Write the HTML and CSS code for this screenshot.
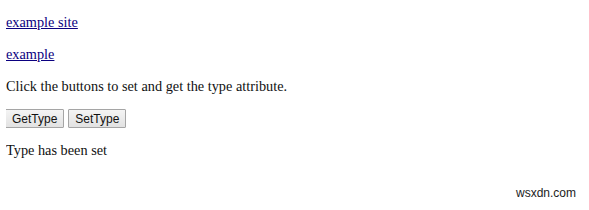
FILE: index.html
```html
<!DOCTYPE html>
<html lang="en">
<head>
    <meta charset="UTF-8">
    <title>Type attribute</title>
    <link rel="stylesheet" href="styles.css">
</head>
<body>
    <p class="line first"><a href="#" class="link">example site</a></p>
    <p class="line"><a href="#" class="link">example</a></p>
    <p class="line">Click the buttons to set and get the type attribute.</p>
    <div class="buttons">
        <button class="btn">GetType</button>
        <button class="btn">SetType</button>
    </div>
    <p class="line result">Type has been set</p>

    <!-- watermark -->
    <div class="mark">wsxdn.com</div>
</body>
</html>
```

FILE: styles.css
```css
body {
    margin: 6px;
    font-family: 'Liberation Serif', 'Times New Roman', serif;
    font-size: 14.3px;
    color: #111;
    background: #fff;
}
.line {
    margin: 14px 0;
    line-height: 18px;
}
.line.first {
    margin-top: 7px;
}
.line.result {
    margin-top: 13px;
}
.link {
    color: #0b0080;
}
.buttons {
    display: flex;
    gap: 4px;
    margin: 0 0 0 -1px;
}
.btn {
    font-family: 'Liberation Sans', Arial, sans-serif;
    font-size: 12px;
    padding: 1px 6px;
    height: 19px;
    background: linear-gradient(#f4f4f4, #e2e2e2);
    border: 1px solid #a5a5a5;
    border-radius: 1px;
    color: #111;
}
.mark {
    position: absolute;
    left: 516px;
    top: 186px;
    font-family: 'Liberation Sans', Arial, sans-serif;
    font-size: 12px;
    color: #222;
}
```
